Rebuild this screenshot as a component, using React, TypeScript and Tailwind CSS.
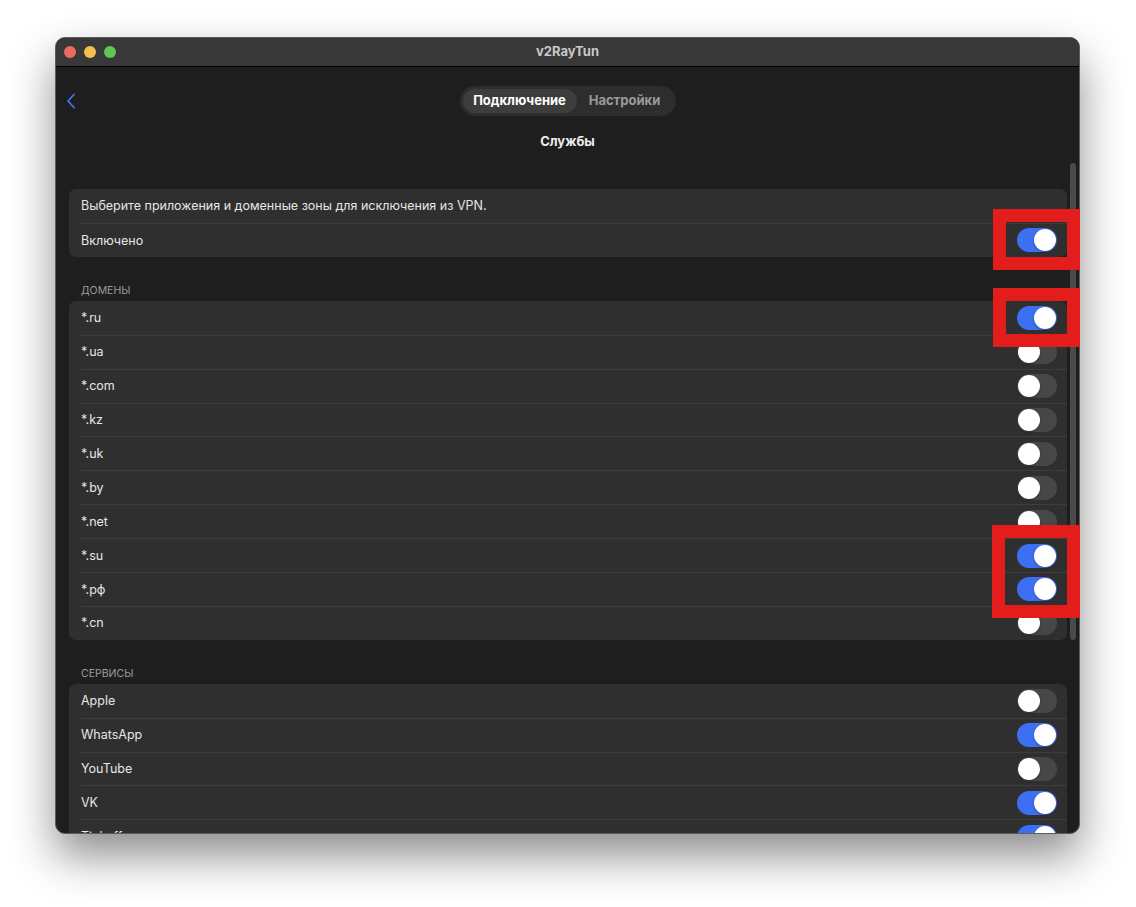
import React from "react";

type Row = { label: string; on: boolean };

const domains: Row[] = [
  { label: "*.ru", on: true },
  { label: "*.ua", on: false },
  { label: "*.com", on: false },
  { label: "*.kz", on: false },
  { label: "*.uk", on: false },
  { label: "*.by", on: false },
  { label: "*.net", on: false },
  { label: "*.su", on: true },
  { label: "*.рф", on: true },
  { label: "*.cn", on: false },
];

const services: Row[] = [
  { label: "Apple", on: false },
  { label: "WhatsApp", on: true },
  { label: "YouTube", on: false },
  { label: "VK", on: true },
  { label: "Tinkoff", on: true },
];

const Toggle = ({ on }: { on: boolean }) => (
  <div
    className={`relative h-[24px] w-[40px] shrink-0 rounded-full ${
      on ? "bg-[#3d6ff2]" : "bg-[#474747]"
    }`}
  >
    <div
      className={`absolute top-[1px] h-[22px] w-[22px] rounded-full bg-white shadow-[0_1px_2px_rgba(0,0,0,0.35)] ${
        on ? "right-[1px]" : "left-[1px]"
      }`}
    />
  </div>
);

const ListRow = ({ label, on, first }: Row & { first?: boolean }) => (
  <div className="flex h-[33.9px] items-center pl-[12px]">
    <div
      className={`flex h-full flex-1 items-center justify-between pr-[10px] ${
        first ? "" : "border-t border-[#3d3d3d]"
      }`}
    >
      <span className="mt-[1px] text-[12.5px] text-[#e6e6e6]">{label}</span>
      <Toggle on={on} />
    </div>
  </div>
);

const SectionLabel = ({ children }: { children: React.ReactNode }) => (
  <div className="mb-[5px] mt-[26px] h-[13px] pl-[12px] pt-[1px] text-[10.5px] uppercase leading-[13px] text-[#9b9b9b]">
    {children}
  </div>
);

export default function App() {
  return (
    <div
      className="relative h-[907px] w-[1136px] overflow-hidden bg-white pl-[55px] pt-[37px]"
      style={{ fontFamily: "Inter, 'Noto Sans', sans-serif" }}
    >
      <div className="flex h-[797px] w-[1025px] flex-col overflow-hidden rounded-[10px] border border-[#5c5c5c] bg-[#1e1e1e] shadow-[0_22px_45px_rgba(0,0,0,0.45)]">
        {/* title bar */}
        <div className="relative flex h-[29px] shrink-0 items-center border-b border-black bg-[#383838]">
          <div className="flex gap-[8px] pl-[8px]">
            <span className="h-[12px] w-[12px] rounded-full bg-[#ec6a5e]" />
            <span className="h-[12px] w-[12px] rounded-full bg-[#f4bf4f]" />
            <span className="h-[12px] w-[12px] rounded-full bg-[#61c554]" />
          </div>
          <div className="absolute inset-0 flex items-center justify-center text-[13px] font-bold text-[#c9c9c9]">
            v2RayTun
          </div>
        </div>

        {/* header */}
        <div className="shrink-0 pb-[11px] pt-[19px]">
          <div className="grid grid-cols-[1fr_auto_1fr] items-center">
            <div className="pl-[9px]">
              <svg width="14" height="16" viewBox="0 0 14 16" fill="none">
                <polyline
                  points="9,1.5 3,8 9,14.5"
                  stroke="#3a78f2"
                  strokeWidth="1.8"
                  strokeLinecap="round"
                  strokeLinejoin="round"
                />
              </svg>
            </div>
            <div className="flex h-[30px] items-center rounded-full bg-[#2d2d2d] p-[3px]">
              <div className="flex h-[24px] w-[114px] items-center justify-center rounded-full bg-[#3d3d3d] text-[13px] font-bold text-white">
                Подключение
              </div>
              <div className="flex h-[24px] w-[96px] items-center justify-center text-[13px] font-bold text-[#9a9a9a]">
                Настройки
              </div>
            </div>
            <div />
          </div>
          <div className="mt-[17px] text-center text-[13px] font-bold leading-[16px] text-[#ececec]">
            Службы
          </div>
        </div>

        {/* scroll area */}
        <div className="relative flex-1 overflow-hidden pl-[13px] pr-[12px] pt-[29px]">
          <div className="absolute right-[3px] top-[3px] h-[477px] w-[6px] rounded-full bg-[#4a4a4a]" />

          <div className="overflow-hidden rounded-[7px] bg-[#2f2f2f]">
            <div className="flex h-[34px] items-center pl-[12px]">
              <span className="text-[12.5px] text-[#e6e6e6]">
                Выберите приложения и доменные зоны для исключения из VPN.
              </span>
            </div>
            <ListRow label="Включено" on={true} />
          </div>

          <SectionLabel>Домены</SectionLabel>
          <div className="overflow-hidden rounded-[7px] bg-[#2f2f2f]">
            {domains.map((d, i) => (
              <ListRow key={d.label} label={d.label} on={d.on} first={i === 0} />
            ))}
          </div>

          <SectionLabel>Сервисы</SectionLabel>
          <div className="overflow-hidden rounded-[7px] bg-[#2f2f2f]">
            {services.map((s, i) => (
              <ListRow key={s.label} label={s.label} on={s.on} first={i === 0} />
            ))}
          </div>
        </div>
      </div>

      {/* red annotation frames */}
      <div className="absolute left-[993px] top-[209px] h-[61px] w-[87px] border-[13px] border-[#e31c1c]" />
      <div className="absolute left-[993px] top-[288px] h-[59px] w-[87px] border-[13px] border-[#e31c1c]" />
      <div className="absolute left-[992px] top-[525px] h-[93px] w-[88px] border-[13px] border-[#e31c1c]" />
    </div>
  );
}
